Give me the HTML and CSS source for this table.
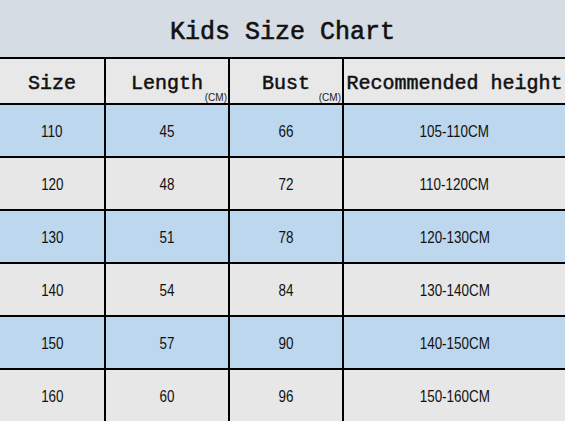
FILE: index.html
```html
<!DOCTYPE html>
<html>
<head>
<meta charset="utf-8">
<link rel="stylesheet" href="styles.css">
</head>
<body>
<div class="title">Kids Size Chart</div>
<div class="chart">
  <div class="cell head">Size</div>
  <div class="cell head">Length<span class="unit">(CM)</span></div>
  <div class="cell head">Bust<span class="unit">(CM)</span></div>
  <div class="cell head">Recommended height</div>

  <div class="cell blue"><span class="num">110</span></div><div class="cell blue"><span class="num">45</span></div><div class="cell blue"><span class="num">66</span></div><div class="cell blue"><span class="num">105-110CM</span></div>
  <div class="cell gray"><span class="num">120</span></div><div class="cell gray"><span class="num">48</span></div><div class="cell gray"><span class="num">72</span></div><div class="cell gray"><span class="num">110-120CM</span></div>
  <div class="cell blue"><span class="num">130</span></div><div class="cell blue"><span class="num">51</span></div><div class="cell blue"><span class="num">78</span></div><div class="cell blue"><span class="num">120-130CM</span></div>
  <div class="cell gray"><span class="num">140</span></div><div class="cell gray"><span class="num">54</span></div><div class="cell gray"><span class="num">84</span></div><div class="cell gray"><span class="num">130-140CM</span></div>
  <div class="cell blue"><span class="num">150</span></div><div class="cell blue"><span class="num">57</span></div><div class="cell blue"><span class="num">90</span></div><div class="cell blue"><span class="num">140-150CM</span></div>
  <div class="cell gray"><span class="num">160</span></div><div class="cell gray"><span class="num">60</span></div><div class="cell gray"><span class="num">96</span></div><div class="cell gray"><span class="num">150-160CM</span></div>
</div>
</body>
</html>
```
FILE: styles.css
```css
html, body {
  margin: 0;
  padding: 0;
  width: 565px;
  height: 421px;
  overflow: hidden;
  background: #e7e7e7;
}
.title {
  height: 57px;
  box-sizing: border-box;
  padding-top: 18px;
  background: #d6dce4;
  text-align: center;
  font-family: "Liberation Mono", monospace;
  font-weight: normal;
  -webkit-text-stroke: 0.6px #111;
  font-size: 25px;
  line-height: 30px;
  color: #111;
}
.chart {
  display: grid;
  grid-template-columns: 104px 122px 112px 221px;
  grid-template-rows: 44px repeat(6, 51px);
  gap: 2px;
  background: #000;
  border-top: 2px solid #000;
}
.cell {
  position: relative;
  display: flex;
  align-items: center;
  justify-content: center;
  font-family: "Liberation Sans", sans-serif;
  font-size: 16px;
  color: #111;
  white-space: nowrap;
  padding-top: 3px;
}
.num {
  display: inline-block;
  transform: scaleX(0.84);
}
.head {
  background: #e8e8e8;
  font-family: "Liberation Mono", monospace;
  font-weight: normal;
  -webkit-text-stroke: 0.5px #111;
  font-size: 20px;
  padding-top: 5px;
}
.blue { background: #bdd7ee; }
.gray { background: #e7e7e7; }
.unit {
  position: absolute;
  right: 1px;
  bottom: 0;
  font-family: "Liberation Sans", sans-serif;
  -webkit-text-stroke: 0;
  font-size: 10px;
  line-height: 11px;
  color: #222;
}
```
